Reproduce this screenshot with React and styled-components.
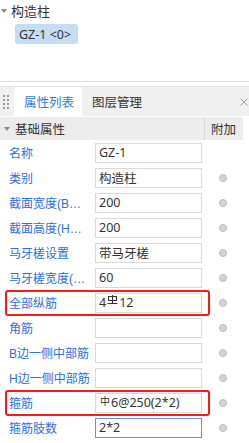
import React from "react";
import styled, { createGlobalStyle } from "styled-components";

const Global = createGlobalStyle`
  html, body { margin: 0; padding: 0; background: #fff; overflow: hidden; }
  body { font-family: "Noto Sans", "Noto Sans CJK SC", sans-serif; font-size: 12px; color: #333; }
`;

const Page = styled.div`
  width: 249px;
  height: 443px;
  overflow: hidden;
`;

const Tree = styled.div`
  height: 82px;
  border-bottom: 1px solid #dcdcdc;
  box-sizing: border-box;
  padding-top: 1px;
`;

const TreeNode = styled.div`
  display: flex;
  align-items: center;
  height: 19px;
  gap: 4px;
  padding-left: 1px;
  color: #333;
  font-size: 13px;
`;

const Caret = styled.span`
  width: 0;
  height: 0;
  border-left: 3px solid transparent;
  border-right: 3px solid transparent;
  border-top: 4px solid #8a8a8a;
`;

const Chip = styled.div`
  margin: 4px 0 0 15px;
  width: 63px;
  height: 20px;
  box-sizing: border-box;
  border-radius: 3px;
  background: #c6dcf3;
  display: flex;
  align-items: center;
  padding-left: 4px;
  font-size: 12.5px;
  color: #333;
  white-space: pre;
`;

const Gap = styled.div`
  height: 4px;
`;

const TabBar = styled.div`
  height: 30px;
  background: #f0f0f0;
  border-top: 1px solid #e2e2e2;
  box-sizing: border-box;
  display: flex;
  align-items: stretch;
`;

const Grip = styled.div`
  width: 14px;
  display: grid;
  grid-template-columns: 2px 2px;
  grid-auto-rows: 2px;
  column-gap: 2px;
  row-gap: 2px;
  align-content: center;
  padding-left: 3px;
  box-sizing: border-box;
  span { background: #9a9a9a; }
`;

const Tab = styled.div`
  width: ${(p) => (p.$active ? "68px" : "auto")};
  padding-left: 10px;
  box-sizing: border-box;
  display: flex;
  align-items: center;
  background: ${(p) => (p.$active ? "#fff" : "transparent")};
  color: ${(p) => (p.$active ? "#2f7be6" : "#333")};
  font-size: 12.5px;
`;

const Close = styled.div`
  margin-left: auto;
  width: 10px;
  display: flex;
  align-items: center;
  justify-content: center;
`;

const Header = styled.div`
  width: 243px;
  height: 23px;
  background: #ececec;
  display: flex;
  align-items: center;
  margin-top: 1px;
`;

const HeaderTitle = styled.div`
  flex: 1;
  display: flex;
  align-items: center;
  gap: 5px;
  padding-left: 4px;
  font-size: 12.5px;
  color: #333;
`;

const HeaderExtra = styled.div`
  width: 39px;
  height: 100%;
  border-left: 1px solid #dadada;
  box-sizing: border-box;
  display: flex;
  align-items: center;
  padding-left: 6px;
  font-size: 12.5px;
  color: #333;
`;

const Rows = styled.div`
  width: 243px;
`;

const Row = styled.div`
  position: relative;
  height: 25px;
  display: flex;
  align-items: center;
`;

const Label = styled.div`
  width: 81px;
  margin-left: 9px;
  margin-right: 5px;
  font-family: "Liberation Sans", "Noto Sans CJK SC", sans-serif;
  color: #2f6de1;
  font-size: 12px;
  white-space: nowrap;
  overflow: hidden;
  text-overflow: ellipsis;
`;

const Value = styled.div`
  width: 107px;
  height: 20px;
  box-sizing: border-box;
  border: 1px solid ${(p) => (p.$focus ? "#6b93d6" : "#dadada")};
  background: #fff;
  display: flex;
  align-items: center;
  padding-left: 3px;
  font-size: 12.5px;
  color: #333;
  white-space: nowrap;
  overflow: hidden;
`;

const DotCell = styled.div`
  flex: 1;
  display: flex;
  justify-content: center;
  align-items: center;
  padding-left: 1px;
`;

const Dot = styled.span`
  width: 8px;
  height: 8px;
  border-radius: 50%;
  background: #d4d4d4;
  border: 1px solid #bdbdbd;
  box-sizing: border-box;
`;

const Highlight = styled.div`
  position: absolute;
  left: 5px;
  width: 205px;
  top: 0;
  height: 26px;
  box-sizing: border-box;
  border: 2.5px solid #f21c1c;
  border-radius: 3px;
  pointer-events: none;
`;

const Small = styled.span`
  font-size: 10px;
  position: relative;
  top: -2px;
  margin: 0 1px 0 1px;
`;

const Grade3 = () => (
  <svg width="11" height="10" viewBox="0 0 11 10" style={{ margin: "0 1px", position: "relative", top: "-3px" }}>
    <rect x="1.5" y="1.5" width="8" height="4" fill="none" stroke="#333" strokeWidth="1" />
    <line x1="5.5" y1="0" x2="5.5" y2="9" stroke="#333" strokeWidth="1" />
    <line x1="0.5" y1="8.5" x2="10.5" y2="8.5" stroke="#333" strokeWidth="1" />
  </svg>
);

const rows = [
  { label: "名称", value: "GZ-1", dot: false },
  { label: "类别", value: "构造柱" },
  { label: "截面宽度(B边)(mm)", value: "200" },
  { label: "截面高度(H边)(mm)", value: "200" },
  { label: "马牙槎设置", value: "带马牙槎" },
  { label: "马牙槎宽度(mm)", value: "60" },
  { label: "全部纵筋", value: (<>4<Grade3 />12</>), mark: true },
  { label: "角筋", value: "" },
  { label: "B边一侧中部筋", value: "" },
  { label: "H边一侧中部筋", value: "" },
  { label: "箍筋", value: (<><Small>中</Small>6@250(2*2)</>), mark: true },
  { label: "箍筋肢数", value: "2*2", focus: true },
  { label: "", value: "" },
];

export default function App() {
  return (
    <Page>
      <Global />
      <Tree>
        <TreeNode>
          <Caret />
          <span>构造柱</span>
        </TreeNode>
        <Chip>{"GZ-1 <0>"}</Chip>
      </Tree>
      <Gap />
      <TabBar>
        <Grip>
          {Array.from({ length: 8 }).map((_, i) => (
            <span key={i} />
          ))}
        </Grip>
        <Tab $active>属性列表</Tab>
        <Tab>图层管理</Tab>
        <Close>
          <svg width="8" height="8" viewBox="0 0 8 8">
            <path d="M0.5 0.5 L7.5 7.5 M7.5 0.5 L0.5 7.5" stroke="#a0a0a0" strokeWidth="1" />
          </svg>
        </Close>
      </TabBar>
      <Header>
        <HeaderTitle>
          <Caret />
          <span>基础属性</span>
        </HeaderTitle>
        <HeaderExtra>附加</HeaderExtra>
      </Header>
      <Rows>
        {rows.map((r, i) => (
          <Row key={i}>
            <Label>{r.label}</Label>
            <Value $focus={r.focus}>{r.value}</Value>
            <DotCell>{r.dot === false || r.label === "" ? null : <Dot />}</DotCell>
            {r.mark && <Highlight />}
          </Row>
        ))}
      </Rows>
    </Page>
  );
}
